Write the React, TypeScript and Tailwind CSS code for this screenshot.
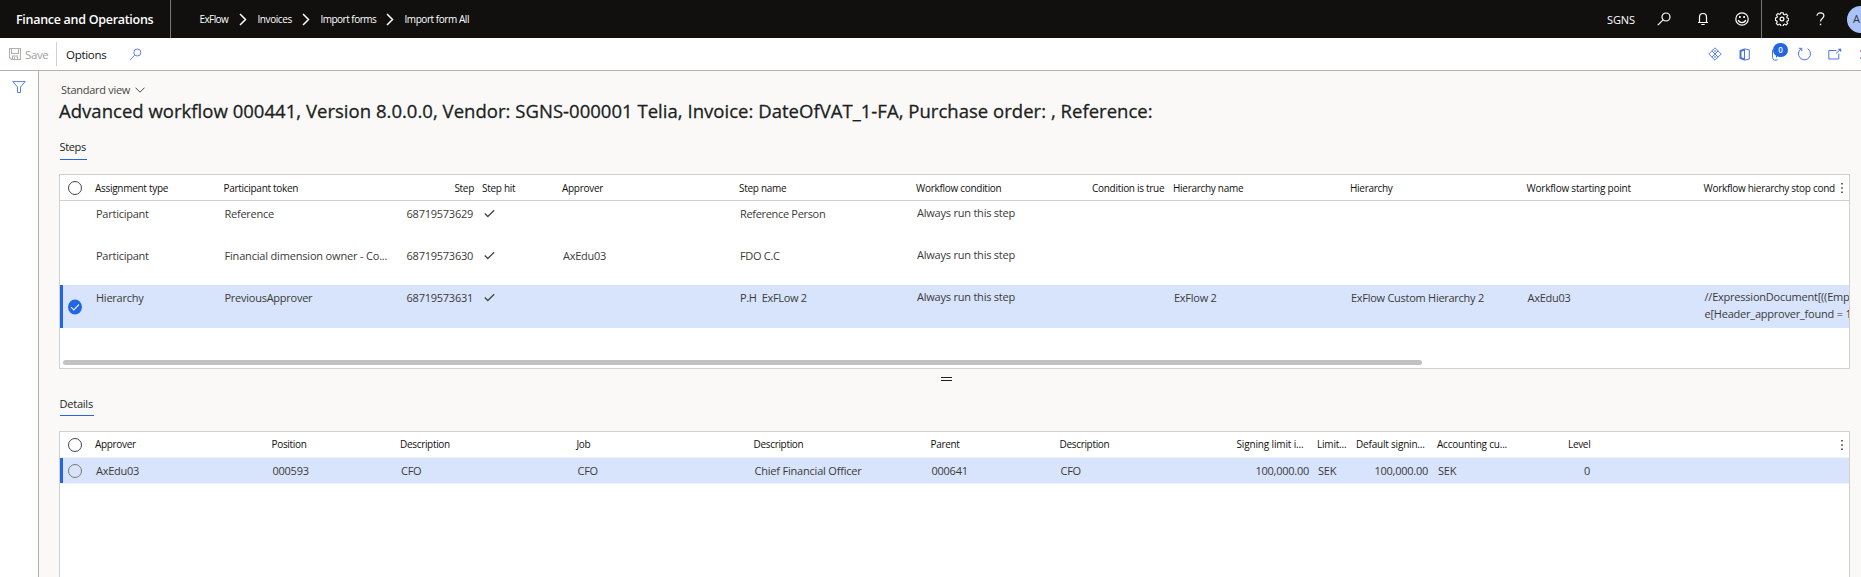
import type { ReactNode } from "react";
import clsx from "clsx";

const STEP_GRID =
  "grid grid-cols-[35px_128.5px_171.5px_87px_80px_177px_177px_176px_81px_177px_176.5px_177px_1fr]";
const DETAIL_GRID =
  "grid grid-cols-[35px_176.5px_128.5px_176.5px_177px_177px_129px_169px_88.5px_39px_81px_120px_47px_1fr]";

const steps = [
  { type: "Participant", token: "Reference", step: "68719573629", approver: "", name: "Reference Person", hierName: "", hier: "", start: "", stop: [] },
  { type: "Participant", token: "Financial dimension owner - Co...", step: "68719573630", approver: "AxEdu03", name: "FDO C.C", hierName: "", hier: "", start: "", stop: [] },
  {
    type: "Hierarchy", token: "PreviousApprover", step: "68719573631", approver: "", name: "P.H  ExFLow 2",
    hierName: "ExFlow 2", hier: "ExFlow Custom Hierarchy 2", start: "AxEdu03",
    stop: ["//ExpressionDocument[((Emp", "e[Header_approver_found = 1"], selected: true,
  },
];

function Svg({ w, h, className, children }: { w: number; h: number; className?: string; children: ReactNode }) {
  return (
    <svg width={w} height={h} viewBox={`0 0 ${w} ${h}`} fill="none" stroke="currentColor" className={clsx("block shrink-0", className)}>
      {children}
    </svg>
  );
}

function SearchIcon({ className }: { className?: string }) {
  return (
    <Svg w={14} h={14} className={className}>
      <circle cx="9" cy="5" r="4" strokeWidth="1.2" />
      <path d="M6.1 7.9 0.8 13.2" strokeWidth="1.2" />
    </Svg>
  );
}

function Crumb({ children, className }: { children: ReactNode; className: string }) {
  return <span className={clsx("shrink-0 whitespace-nowrap pt-px text-[10px]", className)}>{children}</span>;
}

function CrumbArrow() {
  return (
    <Svg w={8} h={13} className="mx-[10.5px]">
      <path d="M1 1l5.5 5.5L1 12" strokeWidth="1.5" />
    </Svg>
  );
}

function TopBar() {
  return (
    <header className="flex h-[38px] shrink-0 items-center overflow-hidden bg-[#11100f] text-white">
      <div className="flex h-full w-[171px] shrink-0 items-center border-r border-[#797775] pl-[16px] pt-[2px] text-[12.5px] font-semibold tracking-[-0.29px]">
        Finance and Operations
      </div>
      <nav className="flex items-center pl-[28.5px]">
        <Crumb className="w-[29px] tracking-[-0.6px]">ExFlow</Crumb>
        <CrumbArrow />
        <Crumb className="w-[34px] tracking-[-0.42px]">Invoices</Crumb>
        <CrumbArrow />
        <Crumb className="w-[56px] tracking-[-0.52px]">Import forms</Crumb>
        <span className="-ml-px flex">
          <CrumbArrow />
        </span>
        <Crumb className="w-[66px] tracking-[-0.44px]">Import form All</Crumb>
      </nav>
      <div className="ml-auto flex h-full shrink-0 items-center">
        <span className="w-[50px] pt-[2px] text-[11px] tracking-[-0.1px]">SGNS</span>
        <SearchIcon className="mr-[26px]" />
        <Svg w={12} h={14} className="mr-[26px]">
          <path d="M2.5 10.5V5a3.5 3.5 0 0 1 7 0v5.5M1 10.5h10M4.3 12.5h3.4" strokeWidth="1.2" />
        </Svg>
        <Svg w={14} h={14} className="mr-[12px]">
          <circle cx="7" cy="7" r="6.2" strokeWidth="1.2" />
          <path d="M3.3 8c.8 3.400 6.600 3.400 7.400 0" strokeWidth="1.2" />
          <path d="M4.900 4v2M9.100 4v2" strokeWidth="1.6" />
        </Svg>
        <div className="h-full w-px bg-[#797775]" />
        <Svg w={14} h={14} className="ml-[13px] mr-[27px]">
          <path
            d="M5.8.7h2.400l.3 1.700 1.100.5 1.500-1 1.600 1.600-1 1.500.5 1.100 1.600.3v2.200l-1.600.3-.5 1.100 1 1.500-1.600 1.600-1.500-1-1.100.5-.3 1.700H5.800l-.3-1.700-1.100-.5-1.500 1-1.600-1.600 1-1.500-.5-1.100L.5 8.300V6l1.400-.4.5-1.100-1-1.500L3 1.400l1.400 1 1.100-.5z"
            strokeWidth="1.1"
          />
          <circle cx="7" cy="7" r="1.9" strokeWidth="1.2" />
        </Svg>
        <Svg w={9} h={14} className="mr-[22px]">
          <path d="M1 3.800C1 1.900 2.500.8 4.400.8s3.500 1.200 3.500 3c0 2.700-3.400 2.600-3.400 5.600" strokeWidth="1.2" />
          <path d="M4.500 11.700v1.500" strokeWidth="1.4" />
        </Svg>
        <div className="h-[27px] w-[14px] overflow-hidden">
          <div className="flex h-[27px] w-[27px] items-center rounded-full bg-[#a9c3f8] pl-[6px] text-[11px] text-[#323130]">A</div>
        </div>
      </div>
    </header>
  );
}

function ActionBar() {
  return (
    <div className="flex h-[33px] shrink-0 items-center overflow-hidden border-b border-[#b3b0ad] bg-white">
      <Svg w={12} h={12} className="ml-[9px] text-[#b3b0ad]">
        <path d="M.5.5h11v11h-9l-2-2zM2.500.5v5h7v-5M3.500 11.500v-3.500h5v3.500M5.500 9v2" strokeWidth="1.1" />
      </Svg>
      <span className="ml-[4px] w-[31px] pt-px text-[11.5px] tracking-[-0.4px] text-[#a19f9d]">Save</span>
      <div className="h-[24px] w-px bg-[#d2d0ce]" />
      <span className="ml-[9px] w-[63px] pt-px text-[11.5px] tracking-[-0.3px] text-[#11100f]">Options</span>
      <Svg w={13} h={13} className="text-[#5b7fe0]">
        <circle cx="8.3" cy="4.5" r="3.5" />
        <path d="M5.700 7.200.8 12" />
      </Svg>
      <div className="ml-auto flex h-full shrink-0 items-center text-[#4a74e0]">
        <Svg w={14} h={14} className="mr-[17px]">
          <path d="M7 .8 13.200 7 7 13.200.8 7zM3.900 3.900l6.200 6.200M10.100 3.900 3.900 10.100" strokeWidth=".9" />
          <path d="M5.300 2.500 8.500 5.700M8.700 2.500 5.500 5.700M5.300 11.500 8.500 8.300M8.700 11.500 5.500 8.300" strokeWidth=".6" />
        </Svg>
        <Svg w={11} h={13} className="mr-[21px]">
          <path d="M5.500 1.500 1.500 3v7l4 1.500" strokeWidth="2" />
          <path d="M5.500.8 10.300 2v9l-4.800 1.200M5.500 1v11" strokeWidth="1" />
        </Svg>
        <div className="relative mr-[15px] h-[13px] w-[11px]">
          <Svg w={8} h={13}>
            <path d="M5.500 9.500V3a2 2 0 0 0-4 0v6.500a3 3 0 0 0 5 2" />
          </Svg>
          <div className="absolute -top-[5px] left-[2px] flex h-[14px] w-[15px] items-center justify-center rounded-full bg-[#2266e3] text-[8px] font-semibold text-white">
            0
          </div>
        </div>
        <Svg w={15} h={14} className="mr-[16px]">
          <path d="M4.200 1.800A6 6 0 1 0 10.600 1.700M1.800 1.300h3v3" />
        </Svg>
        <Svg w={14} h={12} className="mr-[18px]">
          <path d="M8.500 2.500H.8v8.500h10V5.500M8 5.500 12.500 1.200" />
          <path d="M9.800.8h3.400v3.400z" fill="currentColor" stroke="none" />
        </Svg>
        <Svg w={1} h={9} className="text-[#c98fd0]">
          <path d="M.5 0v2M.5 7v2" />
        </Svg>
      </div>
    </div>
  );
}

function Tab({ children, className }: { children: ReactNode; className: string }) {
  return (
    <div className={clsx("ml-[0.5px] whitespace-nowrap border-b border-[#2266e3] text-[11px] leading-[16px] text-[#201f1e]", className)}>
      {children}
    </div>
  );
}

function Radio({ className }: { className?: string }) {
  return <div className={clsx("h-[14px] w-[14px] shrink-0 rounded-full border", className)} />;
}

function Kebab() {
  return (
    <Svg w={2} h={12} className="mt-px">
      <path d="M1 1v1.400M1 5.300v1.400M1 9.600V11" strokeWidth="1.4" stroke="#201f1e" />
    </Svg>
  );
}

function StepsTable() {
  return (
    <div className="flex h-[195px] w-[1791px] flex-col overflow-hidden border border-[#d2d0ce] bg-white">
      <div className="flex h-[26px] shrink-0 items-center border-b border-[#d2d0ce]">
        <div className={clsx(STEP_GRID, "w-[1781px] items-center whitespace-nowrap pt-[2px] text-[10px] tracking-[-0.29px] text-[#11100f]")}>
          <Radio className="-mt-[2px] ml-[8px] border-[#484644]" />
          <span>Assignment type</span>
          <span>Participant token</span>
          <span className="pr-[8px] text-right">Step</span>
          <span>Step hit</span>
          <span>Approver</span>
          <span>Step name</span>
          <span>Workflow condition</span>
          <span>Condition is true</span>
          <span>Hierarchy name</span>
          <span>Hierarchy</span>
          <span className="tracking-[-0.22px]">Workflow starting point</span>
          <span>Workflow hierarchy stop cond</span>
        </div>
        <Kebab />
      </div>
      {steps.map((s) => (
        <div
          key={s.step}
          className={clsx(
            STEP_GRID,
            "shrink-0 whitespace-pre text-[11px] leading-[16px] tracking-[-0.25px] text-[#3b3a39]",
            s.selected ? "h-[43px] bg-[#d8e4fc]" : "h-[42px]",
          )}
        >
          <div className={clsx("flex items-center", s.selected && "border-l-3 border-[#2266e3]")}>
            {s.selected && (
              <Svg w={14} h={16} className="ml-[5px]">
                <ellipse cx="7" cy="8" rx="7" ry="7.5" fill="#2266e3" stroke="none" />
                <path d="M3 8.200 5.800 11 11 5.500" stroke="#e8effd" strokeWidth="1.1" />
              </Svg>
            )}
          </div>
          <span className="pl-px pt-[5px]">{s.type}</span>
          <span className={clsx("pl-px pt-[5px]", s.token.length > 20 && "tracking-[-0.18px]")}>{s.token}</span>
          <span className="pr-[9px] pt-[5px] text-right">{s.step}</span>
          <Svg w={11} h={9} className="ml-[2px] mt-[8px] text-[#484644]">
            <path d="M.8 4.500 3.800 7.500 10.200 1.200" strokeWidth="1.3" />
          </Svg>
          <span className="pl-px pt-[5px]">{s.approver}</span>
          <span className="pl-px pt-[5px] tracking-[-0.32px]">{s.name}</span>
          <span className="pl-px pt-[4px] tracking-[-0.22px]">Always run this step</span>
          <span />
          <span className="pl-px pt-[5px]">{s.hierName}</span>
          <span className="pl-px pt-[5px] tracking-[-0.27px]">{s.hier}</span>
          <span className="pl-px pt-[5px]">{s.start}</span>
          <div className="min-w-0 overflow-hidden pl-px pt-[4px] tracking-[-0.22px]">
            {s.stop.map((line) => (
              <div key={line} className="h-[17px]">{line}</div>
            ))}
          </div>
        </div>
      ))}
      <div className="mt-auto mb-[3px] ml-[3px] h-[5px] w-[1359px] rounded-full bg-[#c2c2c2]" />
    </div>
  );
}

function DetailsTable() {
  return (
    <div className="flex w-[1791px] flex-1 flex-col overflow-hidden border border-b-0 border-[#d2d0ce] bg-white">
      <div className="flex h-[26px] shrink-0 items-center border-b border-[#edf2fd]">
        <div className={clsx(DETAIL_GRID, "w-[1781px] items-center whitespace-nowrap text-[10px] tracking-[-0.32px] text-[#11100f]")}>
          <Radio className="ml-[8px] border-[#484644]" />
          <span>Approver</span>
          <span>Position</span>
          <span>Description</span>
          <span>Job</span>
          <span>Description</span>
          <span>Parent</span>
          <span>Description</span>
          <span className="pl-[8px] tracking-[-0.15px]">Signing limit i...</span>
          <span className="tracking-[-0.2px]">Limit...</span>
          <span className="tracking-[-0.2px]">Default signin...</span>
          <span className="tracking-[-0.2px]">Accounting cu...</span>
          <span className="pl-[11px]">Level</span>
        </div>
        <Kebab />
      </div>
      <div className={clsx(DETAIL_GRID, "h-[26px] shrink-0 items-center whitespace-nowrap border-b border-[#edf2fd] bg-[#d8e4fc] text-[11px] leading-[16px] tracking-[-0.25px] text-[#3b3a39]")}>
        <div className="flex h-full items-center border-l-3 border-[#2266e3]">
          <Radio className="ml-[5px] border-[#797775]" />
        </div>
        <span className="pl-px">AxEdu03</span>
        <span className="pl-px">000593</span>
        <span className="pl-px">CFO</span>
        <span className="pl-px">CFO</span>
        <span className="pl-px tracking-[-0.2px]">Chief Financial Officer</span>
        <span className="pl-px">000641</span>
        <span className="pl-px">CFO</span>
        <span className="pr-[8px] text-right">100,000.00</span>
        <span className="pl-px">SEK</span>
        <span className="pr-[9px] text-right">100,000.00</span>
        <span className="pl-px">SEK</span>
        <span className="pr-[14px] text-right">0</span>
      </div>
    </div>
  );
}

export default function App() {
  return (
    <div className="flex h-[577px] w-[1861px] flex-col overflow-hidden bg-white font-['Open_Sans','Noto_Sans',sans-serif]">
      <TopBar />
      <ActionBar />
      <div className="flex min-h-0 flex-1">
        <aside className="w-[39px] shrink-0 border-r border-[#b3b0ad] bg-white pl-[11.5px] pt-[10px]">
          <Svg w={14} h={12} className="text-[#5b7fe0]">
            <path d="M.8.6h12.400L8.500 6v5.500h-3V6z" />
          </Svg>
        </aside>
        <main className="flex min-w-0 flex-1 flex-col bg-[#faf9f8] pl-[20px]">
          <div className="mt-[11px] flex h-[16px] shrink-0 items-center pl-[2px] text-[11px] tracking-[-0.28px] text-[#484644]">
            <span className="w-[74px]">Standard view</span>
            <Svg w={10} h={6}>
              <path d="M.5.700 5 5.200 9.500.7" />
            </Svg>
          </div>
          <h1 className="h-[26px] shrink-0 whitespace-nowrap text-[18.5px] leading-[26px] tracking-[0.027px] text-[#201f1e] [-webkit-text-stroke:0.3px_#201f1e]">
            Advanced workflow 000441, Version 8.0.0.0, Vendor: SGNS-000001 Telia, Invoice: DateOfVAT_1-FA, Purchase order: , Reference:
          </h1>
          <div className="flex h-[50px] shrink-0 items-start pt-[15px]">
            <Tab className="h-[21px] w-[27px] tracking-[-0.35px]">Steps</Tab>
          </div>
          <StepsTable />
          <div className="flex h-[27px] shrink-0 justify-center pr-[28px] pt-[8px]">
            <div className="h-[4px] w-[11px] border-y border-[#201f1e]" />
          </div>
          <div className="flex h-[35px] shrink-0 items-start">
            <Tab className="h-[20px] w-[34px] tracking-[-0.22px]">Details</Tab>
          </div>
          <DetailsTable />
        </main>
      </div>
    </div>
  );
}
